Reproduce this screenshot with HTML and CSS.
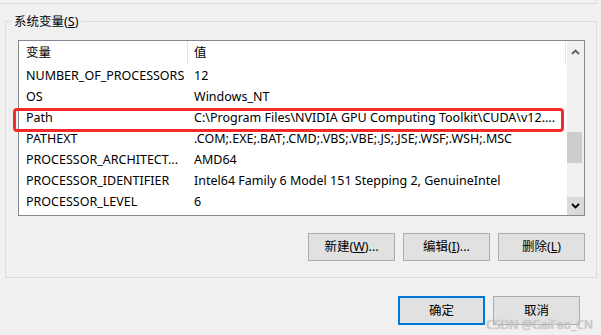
FILE: index.html
```html
<!DOCTYPE html>
<html lang="zh-CN">

<head>
    <meta charset="UTF-8">
    <title>环境变量</title>
    <link rel="stylesheet" href="styles.css">
</head>

<body>
    <div class="window">
        <div class="prev-group"></div>

        <div class="group">
            <div class="group-title">系统变量(<u>S</u>)</div>

            <div class="listbox">
                <div class="list-main">
                    <div class="list-row list-head">
                        <div class="cell">变量</div>
                        <div class="cell">值</div>
                    </div>
                    <div class="list-row">
                        <div class="cell">NUMBER_OF_PROCESSORS</div>
                        <div class="cell">12</div>
                    </div>
                    <div class="list-row">
                        <div class="cell">OS</div>
                        <div class="cell">Windows_NT</div>
                    </div>
                    <div class="list-row">
                        <div class="cell">Path</div>
                        <div class="cell">C:\Program Files\NVIDIA GPU Computing Toolkit\CUDA\v12....</div>
                    </div>
                    <div class="list-row">
                        <div class="cell">PATHEXT</div>
                        <div class="cell">.COM;.EXE;.BAT;.CMD;.VBS;.VBE;.JS;.JSE;.WSF;.WSH;.MSC</div>
                    </div>
                    <div class="list-row">
                        <div class="cell">PROCESSOR_ARCHITECT...</div>
                        <div class="cell">AMD64</div>
                    </div>
                    <div class="list-row">
                        <div class="cell">PROCESSOR_IDENTIFIER</div>
                        <div class="cell">Intel64 Family 6 Model 151 Stepping 2, GenuineIntel</div>
                    </div>
                    <div class="list-row">
                        <div class="cell">PROCESSOR_LEVEL</div>
                        <div class="cell">6</div>
                    </div>
                </div>

                <div class="scrollbar">
                    <div class="sb-btn">
                        <svg width="9" height="6" viewBox="0 0 9 6"><polyline points="1,5 4.5,1.5 8,5" fill="none" stroke="#606060" stroke-width="1.8"/></svg>
                    </div>
                    <div class="sb-track">
                        <div class="sb-thumb"></div>
                    </div>
                    <div class="sb-btn sb-down">
                        <svg width="9" height="6" viewBox="0 0 9 6"><polyline points="1,1 4.5,4.5 8,1" fill="none" stroke="#000" stroke-width="1.8"/></svg>
                    </div>
                </div>

                <!-- annotation box round the Path row -->
                <div class="mark"></div>
            </div>

            <div class="btn-row">
                <button class="btn">新建(<u>W</u>)...</button>
                <button class="btn">编辑(<u>I</u>)...</button>
                <button class="btn">删除(<u>L</u>)</button>
            </div>
        </div>

        <div class="btn-row dialog-btns">
            <button class="btn btn-default">确定</button>
            <button class="btn">取消</button>
        </div>

        <div class="watermark">CSDN @GaiFao_CN</div>
    </div>
</body>

</html>
```

FILE: styles.css
```css
/* General Reset */
* {
    margin: 0;
    padding: 0;
    box-sizing: border-box;
}

body {
    font-family: 'Noto Sans', 'Noto Sans CJK SC', sans-serif;
    font-size: 12.5px;
    color: #000;
    background: #f0f0f0;
}

.window {
    position: relative;
    width: 601px;
    height: 335px;
    overflow: hidden;
    background: #f0f0f0;
}

u {
    text-decoration: underline;
    text-underline-offset: 1px;
}

/* bottom edge of the group above */
.prev-group {
    width: 597px;
    height: 4px;
    border-right: 1px solid #dcdcdc;
    border-bottom: 1px solid #dcdcdc;
}

.group {
    margin: 17px 0 0 5px;
    width: 592px;
    height: 257px;
    border: 1px solid #dcdcdc;
}

.group-title {
    width: fit-content;
    margin: -8px 0 0 5px;
    padding: 0 3px;
    height: 16px;
    line-height: 16px;
    background: #f0f0f0;
}

.listbox {
    position: relative;
    display: flex;
    margin: 10px 0 0 12px;
    width: 567px;
    height: 176px;
    border: 1px solid #828790;
    background: #fff;
}

.list-main {
    width: 548px;
}

.list-row {
    display: grid;
    grid-template-columns: 169px 378px;
    height: 21px;
    line-height: 21px;
    white-space: nowrap;
}

.list-row .cell {
    overflow: hidden;
    padding-left: 7px;
}

.list-row .cell + .cell {
    padding-left: 6px;
}

.list-head {
    height: 24px;
    line-height: 24px;
}

.list-head .cell {
    border-right: 1px solid #e5e5e5;
}

.scrollbar {
    display: flex;
    flex-direction: column;
    width: 17px;
    margin-left: 1px;
    background: #f0f0f0;
}

.sb-btn {
    display: flex;
    align-items: center;
    justify-content: center;
    height: 19px;
    padding-top: 2px;
}

.sb-down {
    height: 18px;
    padding-top: 0;
    background: #dadada;
}

.sb-track {
    flex: 1;
}

.sb-thumb {
    margin: 72px 0 0 0;
    width: 15px;
    height: 31px;
    background: #cdcdcd;
}

.mark {
    position: absolute;
    left: -6px;
    top: 67px;
    width: 551px;
    height: 24px;
    border: 3px solid #f42a2a;
    border-radius: 4px;
}

.btn-row {
    display: flex;
    justify-content: flex-end;
    gap: 8px;
    margin: 17px 11px 0 0;
}

.btn {
    width: 87px;
    height: 28px;
    font-family: inherit;
    font-size: 12.5px;
    line-height: 14px;
    color: #000;
    background: #e1e1e1;
    border: 1px solid #adadad;
}

.dialog-btns {
    margin: 18px 21px 0 0;
    gap: 8px;
}

.dialog-btns .btn {
    height: 29px;
}

.btn-default {
    border: 2px solid #0078d7;
}

.watermark {
    position: absolute;
    right: 8px;
    bottom: 5px;
    font-size: 12px;
    line-height: 11px;
    color: #d0d0d0;
    text-shadow: 0 0 1px #9a9a9a;
}
```
